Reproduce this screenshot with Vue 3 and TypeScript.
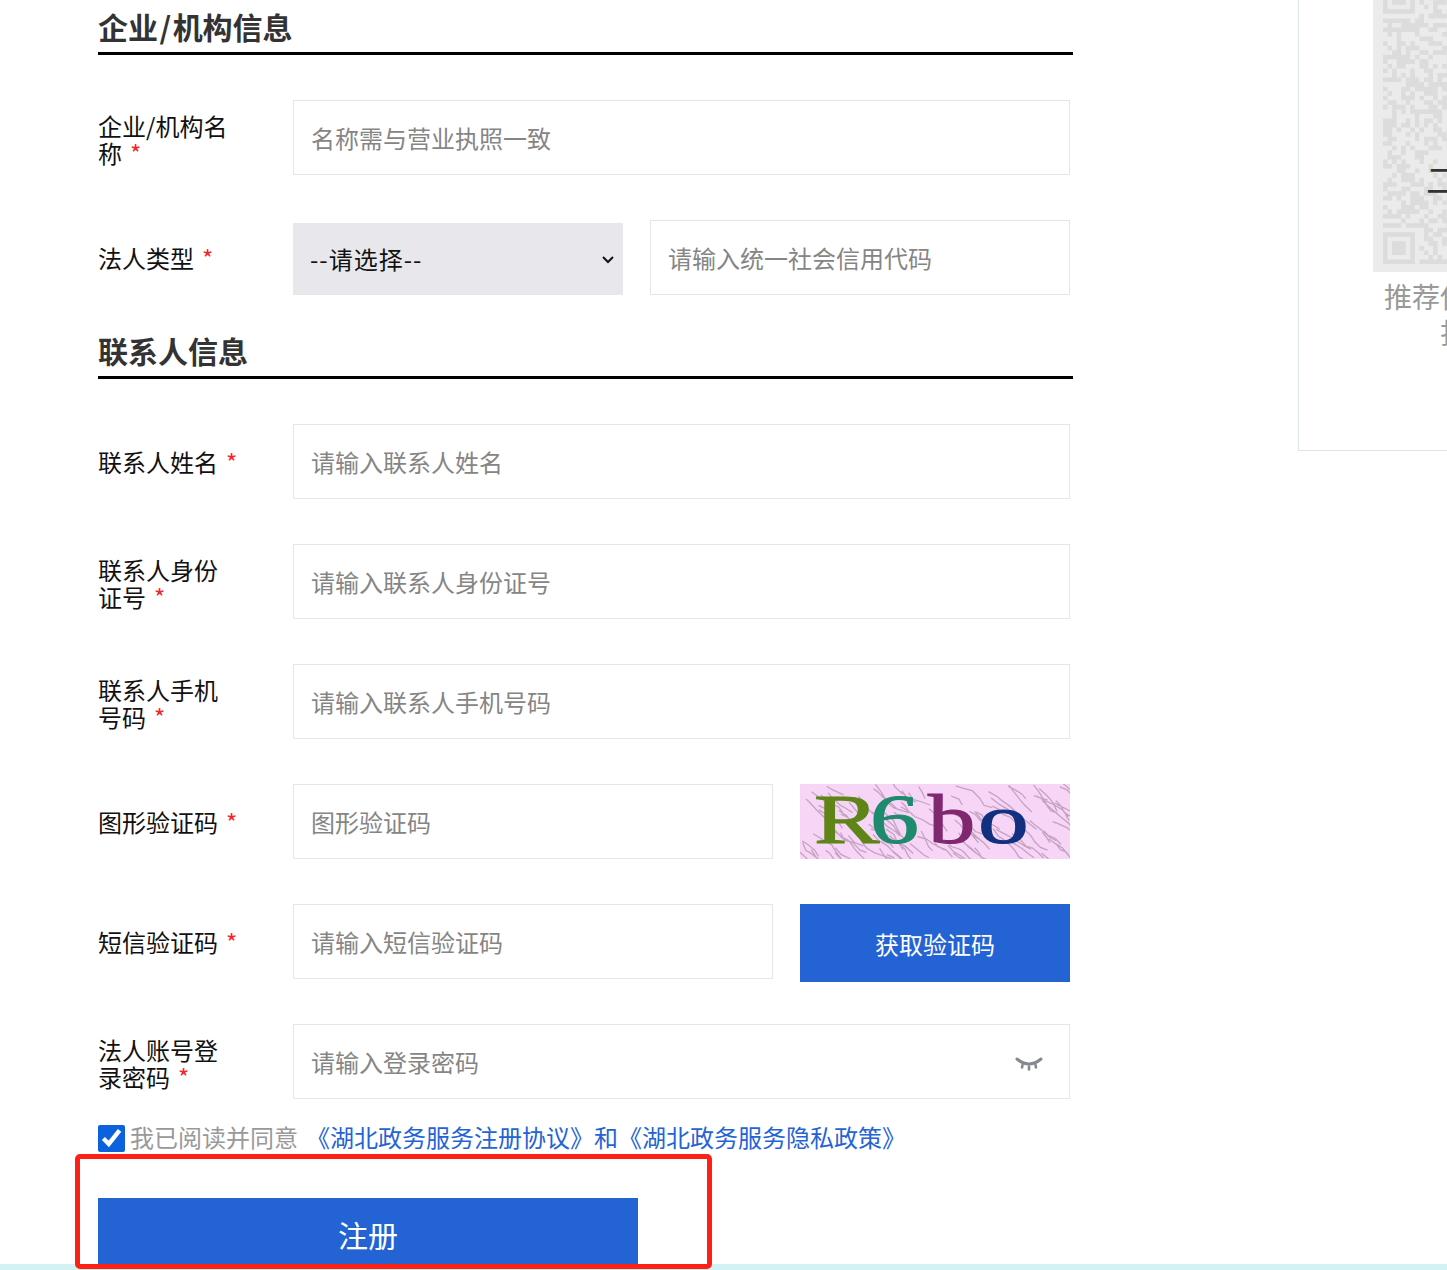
<script setup lang="ts">
import { computed } from 'vue'

interface Field {
  label: string
  placeholder: string
}

const contacts: Field[] = [
  { label: '联系人姓名', placeholder: '请输入联系人姓名' },
  { label: '联系人身份证号', placeholder: '请输入联系人身份证号' },
  { label: '联系人手机号码', placeholder: '请输入联系人手机号码' },
]

function rng(seed: number) {
  let s = seed
  return () => {
    s = (s * 1664525 + 1013904223) % 4294967296
    return s / 4294967296
  }
}

const M = 4.55
const N = 62
const qrPath = computed(() => {
  const r = rng(17)
  let d = ''
  const inFinder = (x: number, y: number, fx: number, fy: number) =>
    x >= fx && x < fx + 8 && y >= fy && y < fy + 8
  for (let y = 0; y < N; y++) {
    for (let x = 0; x < N; x++) {
      if (inFinder(x, y, 0, 0) || inFinder(x, y, 0, N - 8) || inFinder(x, y, N - 8, 0)) {
        r()
        continue
      }
      if (r() > 0.5) d += `M${x * M} ${y * M}h${M}v${M}h${-M}z`
    }
  }
  const finder = (fx: number, fy: number) => {
    const x = fx * M
    const y = fy * M
    const o = 7 * M
    const i = 5 * M
    const c = 3 * M
    return (
      `M${x} ${y}h${o}v${o}h${-o}z` +
      `M${x + M} ${y + M}v${i}h${i}v${-i}z` +
      `M${x + 2 * M} ${y + 2 * M}h${c}v${c}h${-c}z`
    )
  }
  return d + finder(0, 0) + finder(0, N - 7) + finder(N - 7, 0)
})
const qrSize = M * N

const noise = computed(() => {
  const r = rng(91)
  let d = ''
  for (let i = 0; i < 110; i++) {
    let x = r() * 290 - 10
    let y = r() * 85 - 5
    d += `M${x.toFixed(1)} ${y.toFixed(1)}`
    const steps = 2 + Math.floor(r() * 4)
    for (let k = 0; k < steps; k++) {
      x += 3 + r() * 6
      y += 2 + r() * 6
      d += `L${x.toFixed(1)} ${y.toFixed(1)}`
    }
  }
  return d
})
</script>

<template>
  <div class="page">
    <div class="layout">
      <main class="form">
        <h2 class="heading first">企业<span class="slash">/</span>机构信息</h2>
        <div class="row">
          <label class="label two">企业/机构名称<i class="req">*</i></label>
          <input class="input wide" placeholder="名称需与营业执照一致" />
        </div>
        <div class="row">
          <label class="label">法人类型<i class="req">*</i></label>
          <div class="pair">
            <div class="select-wrap">
              <select class="select">
                <option>--请选择--</option>
              </select>
              <svg class="chevron" width="14" height="10" viewBox="0 0 14 10" fill="none" stroke="#111" stroke-width="2">
                <path d="M2 2l5 5 5-5" />
              </svg>
            </div>
            <input class="input credit" placeholder="请输入统一社会信用代码" />
          </div>
        </div>

        <h2 class="heading">联系人信息</h2>
        <div v-for="f in contacts" :key="f.label" class="row">
          <label class="label" :class="{ two: f.label.length > 5 }">{{ f.label }}<i class="req">*</i></label>
          <input class="input wide" :placeholder="f.placeholder" />
        </div>
        <div class="row">
          <label class="label">图形验证码<i class="req">*</i></label>
          <div class="pair">
            <input class="input half" placeholder="图形验证码" />
            <svg class="captcha" width="270" height="75" viewBox="0 0 270 75">
              <rect width="270" height="75" fill="#f6d5f6" />
              <path :d="noise" fill="none" stroke="#c5a2c2" stroke-width="1.3" />
              <g class="captcha-text" stroke-width="1.1">
                <text transform="translate(14 59) scale(1.4 1)" fill="#5f8518" stroke="#5f8518">R</text>
                <text transform="translate(70 59) scale(1.4 1)" fill="#1e8a6e" stroke="#1e8a6e">6</text>
                <text transform="translate(128 59) scale(1.35 1)" fill="#80286f" stroke="#80286f">b</text>
                <text transform="translate(178 59) scale(1.45 1)" fill="#12307f" stroke="#12307f">o</text>
              </g>
            </svg>
          </div>
        </div>
        <div class="row">
          <label class="label">短信验证码<i class="req">*</i></label>
          <div class="pair">
            <input class="input half" placeholder="请输入短信验证码" />
            <button class="code-btn" type="button">获取验证码</button>
          </div>
        </div>
        <div class="row last">
          <label class="label two">法人账号登录密码<i class="req">*</i></label>
          <div class="pw">
            <input class="input wide" placeholder="请输入登录密码" />
            <svg class="eye" width="30" height="16" viewBox="0 0 30 16" fill="none" stroke="#85888c" stroke-width="3" stroke-linecap="round">
              <path d="M3 2Q15 12 27 2" />
              <path d="M8.5 8L8 10.5M15 9.5V12.5M21.5 8L22 10.5" stroke-width="2.6" />
            </svg>
          </div>
        </div>

        <div class="agree">
          <input class="check" type="checkbox" checked />
          <span class="agree-text">我已阅读并同意</span>
          <a class="agree-link">《湖北政务服务注册协议》和《湖北政务服务隐私政策》</a>
        </div>
        <button class="submit" type="button">注册</button>
      </main>

      <aside class="side">
        <div class="qr">
          <svg class="qr-code" :width="qrSize" :height="qrSize" :viewBox="`0 0 ${qrSize} ${qrSize}`">
            <path :d="qrPath" fill="#dcdcdc" fill-rule="evenodd" />
          </svg>
          <span class="qr-tip">二维码已失效</span>
        </div>
        <p class="side-text">推荐使用微信扫码<br />扫码注册</p>
      </aside>
    </div>
    <div class="strip"></div>
    <div class="mark"></div>
  </div>
</template>

<style>
html,
body {
  margin: 0;
  overflow: hidden;
  background: #fff;
}
</style>

<style scoped>
.page {
  position: relative;
  width: 1447px;
  height: 1270px;
  overflow: hidden;
  font-family: "Noto Sans CJK SC", "Liberation Sans", sans-serif;
  color: #111;
}
.layout {
  display: flex;
  align-items: flex-start;
  padding-left: 98px;
}
.form {
  flex: 0 0 975px;
  display: flex;
  flex-direction: column;
}
.heading {
  margin: 29px 0 45px;
  height: 52px;
  border-bottom: 3px solid #000;
  font-size: 30px;
  line-height: 52px;
  font-weight: 700;
  color: #333;
}
.heading.first {
  margin-top: 0;
}
.slash {
  margin: 0 1.5px;
}
.row {
  display: grid;
  grid-template-columns: 195px 777px;
  align-items: center;
  height: 75px;
  margin-bottom: 45px;
}
.row.last,
.row:has(+ .heading) {
  margin-bottom: 0;
}
.label {
  width: 135px;
  font-size: 24px;
  line-height: 27px;
  color: #111;
  white-space: nowrap;
}
.label.two {
  padding-top: 2px;
  white-space: normal;
}
.req {
  margin-left: 8px;
  font-style: normal;
  color: #f5222d;
}
.input {
  box-sizing: border-box;
  height: 75px;
  padding: 0 17px;
  border: 1px solid #e2e6ef;
  outline: none;
  background: #fff;
  font: inherit;
  font-size: 24px;
  color: #333;
}
.input::placeholder {
  color: #858585;
  opacity: 1;
}
.input.wide {
  width: 777px;
}
.input.half {
  width: 480px;
}
.input.credit {
  width: 420px;
}
.pair {
  display: flex;
  align-items: flex-start;
  gap: 27px;
  height: 75px;
}
.select-wrap {
  position: relative;
  flex: none;
  width: 330px;
  height: 72px;
  margin-top: 3px;
}
.select {
  box-sizing: border-box;
  display: block;
  width: 330px;
  height: 72px;
  padding: 0 0 2px 17px;
  border: none;
  border-radius: 0;
  appearance: none;
  background-color: #e8e8ec;
  font: inherit;
  font-size: 24px;
  letter-spacing: 1px;
  color: #111;
}
.chevron {
  position: absolute;
  left: 308px;
  top: 32px;
  pointer-events: none;
}
.captcha {
  display: block;
  flex: none;
}
.captcha-text {
  font-family: "Liberation Serif", serif;
  font-size: 70px;
}
.code-btn {
  width: 270px;
  height: 78px;
  padding: 0;
  border: none;
  background: #2463d3;
  font: inherit;
  font-size: 24px;
  color: #fff;
}
.pw {
  position: relative;
  height: 75px;
}
.eye {
  position: absolute;
  left: 721px;
  top: 33px;
}
.agree {
  display: flex;
  align-items: flex-start;
  height: 27px;
  margin-top: 26px;
  font-size: 24px;
  line-height: 23px;
  white-space: nowrap;
}
.check {
  width: 27px;
  height: 27px;
  margin: 0 5px 0 0;
  accent-color: #0b62dc;
}
.agree-text {
  color: #999;
}
.agree-link {
  margin-left: 8px;
  color: #2463d3;
}
.submit {
  width: 540px;
  height: 67px;
  margin-top: 46px;
  padding: 4px 0 0;
  border: none;
  background: #2463d3;
  font: inherit;
  font-size: 30px;
  color: #fff;
}
.side {
  flex: none;
  box-sizing: border-box;
  width: 400px;
  height: 451px;
  margin-left: 225px;
  padding-left: 74px;
  border-left: 1px solid #dde4f0;
  border-bottom: 1px solid #dde4f0;
}
.qr {
  position: relative;
  display: flex;
  align-items: flex-end;
  box-sizing: border-box;
  width: 250px;
  height: 272px;
  padding: 0 0 8px 10px;
  overflow: hidden;
  background: #ebebeb;
}
.qr-code {
  flex: none;
}
.qr-tip {
  position: absolute;
  left: 53px;
  top: 153px;
  font-size: 34px;
  line-height: 52px;
  white-space: nowrap;
  color: #333;
}
.side-text {
  width: 246px;
  margin: 6px 0 0;
  font-size: 28px;
  line-height: 36px;
  text-align: center;
  white-space: nowrap;
  color: #999;
}
.strip {
  height: 6px;
  margin-top: -1px;
  background: #d3f2f3;
}
.mark {
  position: absolute;
  left: 75px;
  top: 1154px;
  width: 637px;
  height: 115px;
  box-sizing: border-box;
  border: 5px solid #ff2015;
  border-radius: 5px;
}
</style>
